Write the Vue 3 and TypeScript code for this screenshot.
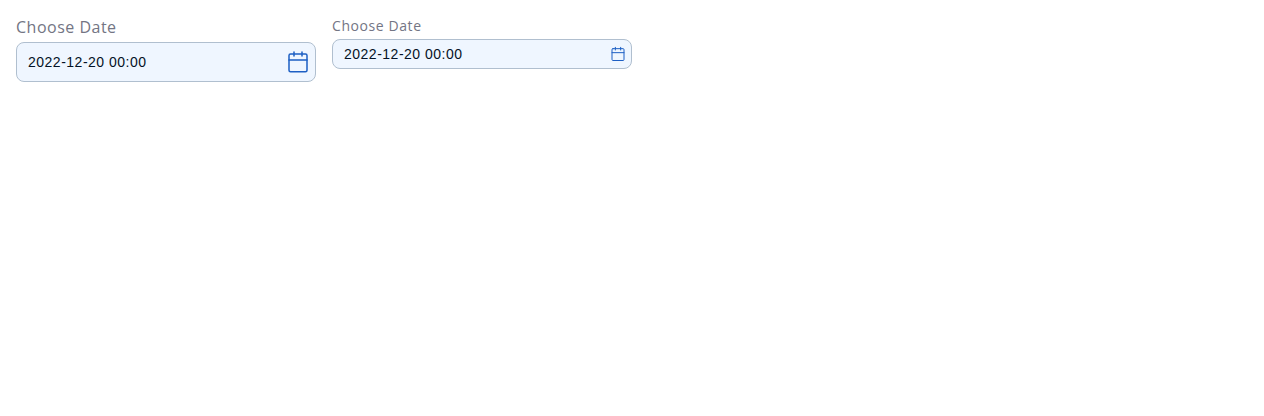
<script setup lang="ts">
interface DateField {
  id: string
  label: string
  value: string
  size: 'medium' | 'small'
}

const fields: DateField[] = [
  { id: 'date-medium', label: 'Choose Date', value: '2022-12-20 00:00', size: 'medium' },
  { id: 'date-small', label: 'Choose Date', value: '2022-12-20 00:00', size: 'small' },
]
</script>

<template>
  <main class="page">
    <div v-for="field in fields" :key="field.id" class="field" :class="field.size">
      <label class="label" :for="field.id">{{ field.label }}</label>
      <div class="control">
        <input :id="field.id" class="input" type="text" :value="field.value" />
        <svg class="icon" viewBox="0 0 24 24" fill="none" stroke="currentColor" stroke-width="1.5" stroke-linecap="round" stroke-linejoin="round">
          <rect x="3" y="4" width="18" height="17.75" rx="1.5" />
          <path d="M16 2v4M8 2v4M3 10h18" />
        </svg>
      </div>
    </div>
  </main>
</template>

<style scoped>
.page {
  display: flex;
  align-items: flex-start;
  gap: 16px;
  padding: 16px;
}
.field {
  width: 300px;
  display: flex;
  flex-direction: column;
}
.label {
  font-family: "Open Sans", sans-serif;
  font-size: 16px;
  line-height: 22px;
  letter-spacing: 0.5px;
  color: #737584;
  margin-bottom: 4px;
}
.control {
  box-sizing: border-box;
  height: 40px;
  display: flex;
  align-items: center;
  padding: 0 5px 0 11px;
  border: 1px solid #b0bfcf;
  border-radius: 8px;
  background: #eff6ff;
}
.input {
  flex: 1;
  min-width: 0;
  padding: 0;
  border: 0;
  outline: 0;
  background: transparent;
  font-family: "Liberation Sans", Arial, sans-serif;
  font-size: 14px;
  letter-spacing: 0.5px;
  color: #041226;
}
.icon {
  flex: none;
  width: 24px;
  height: 24px;
  color: #1d5fc4;
}
.small .label {
  font-size: 14px;
  line-height: 19px;
  letter-spacing: 0.58px;
}
.small .control {
  height: 30px;
}
.small .icon {
  width: 16px;
  height: 16px;
}
</style>
